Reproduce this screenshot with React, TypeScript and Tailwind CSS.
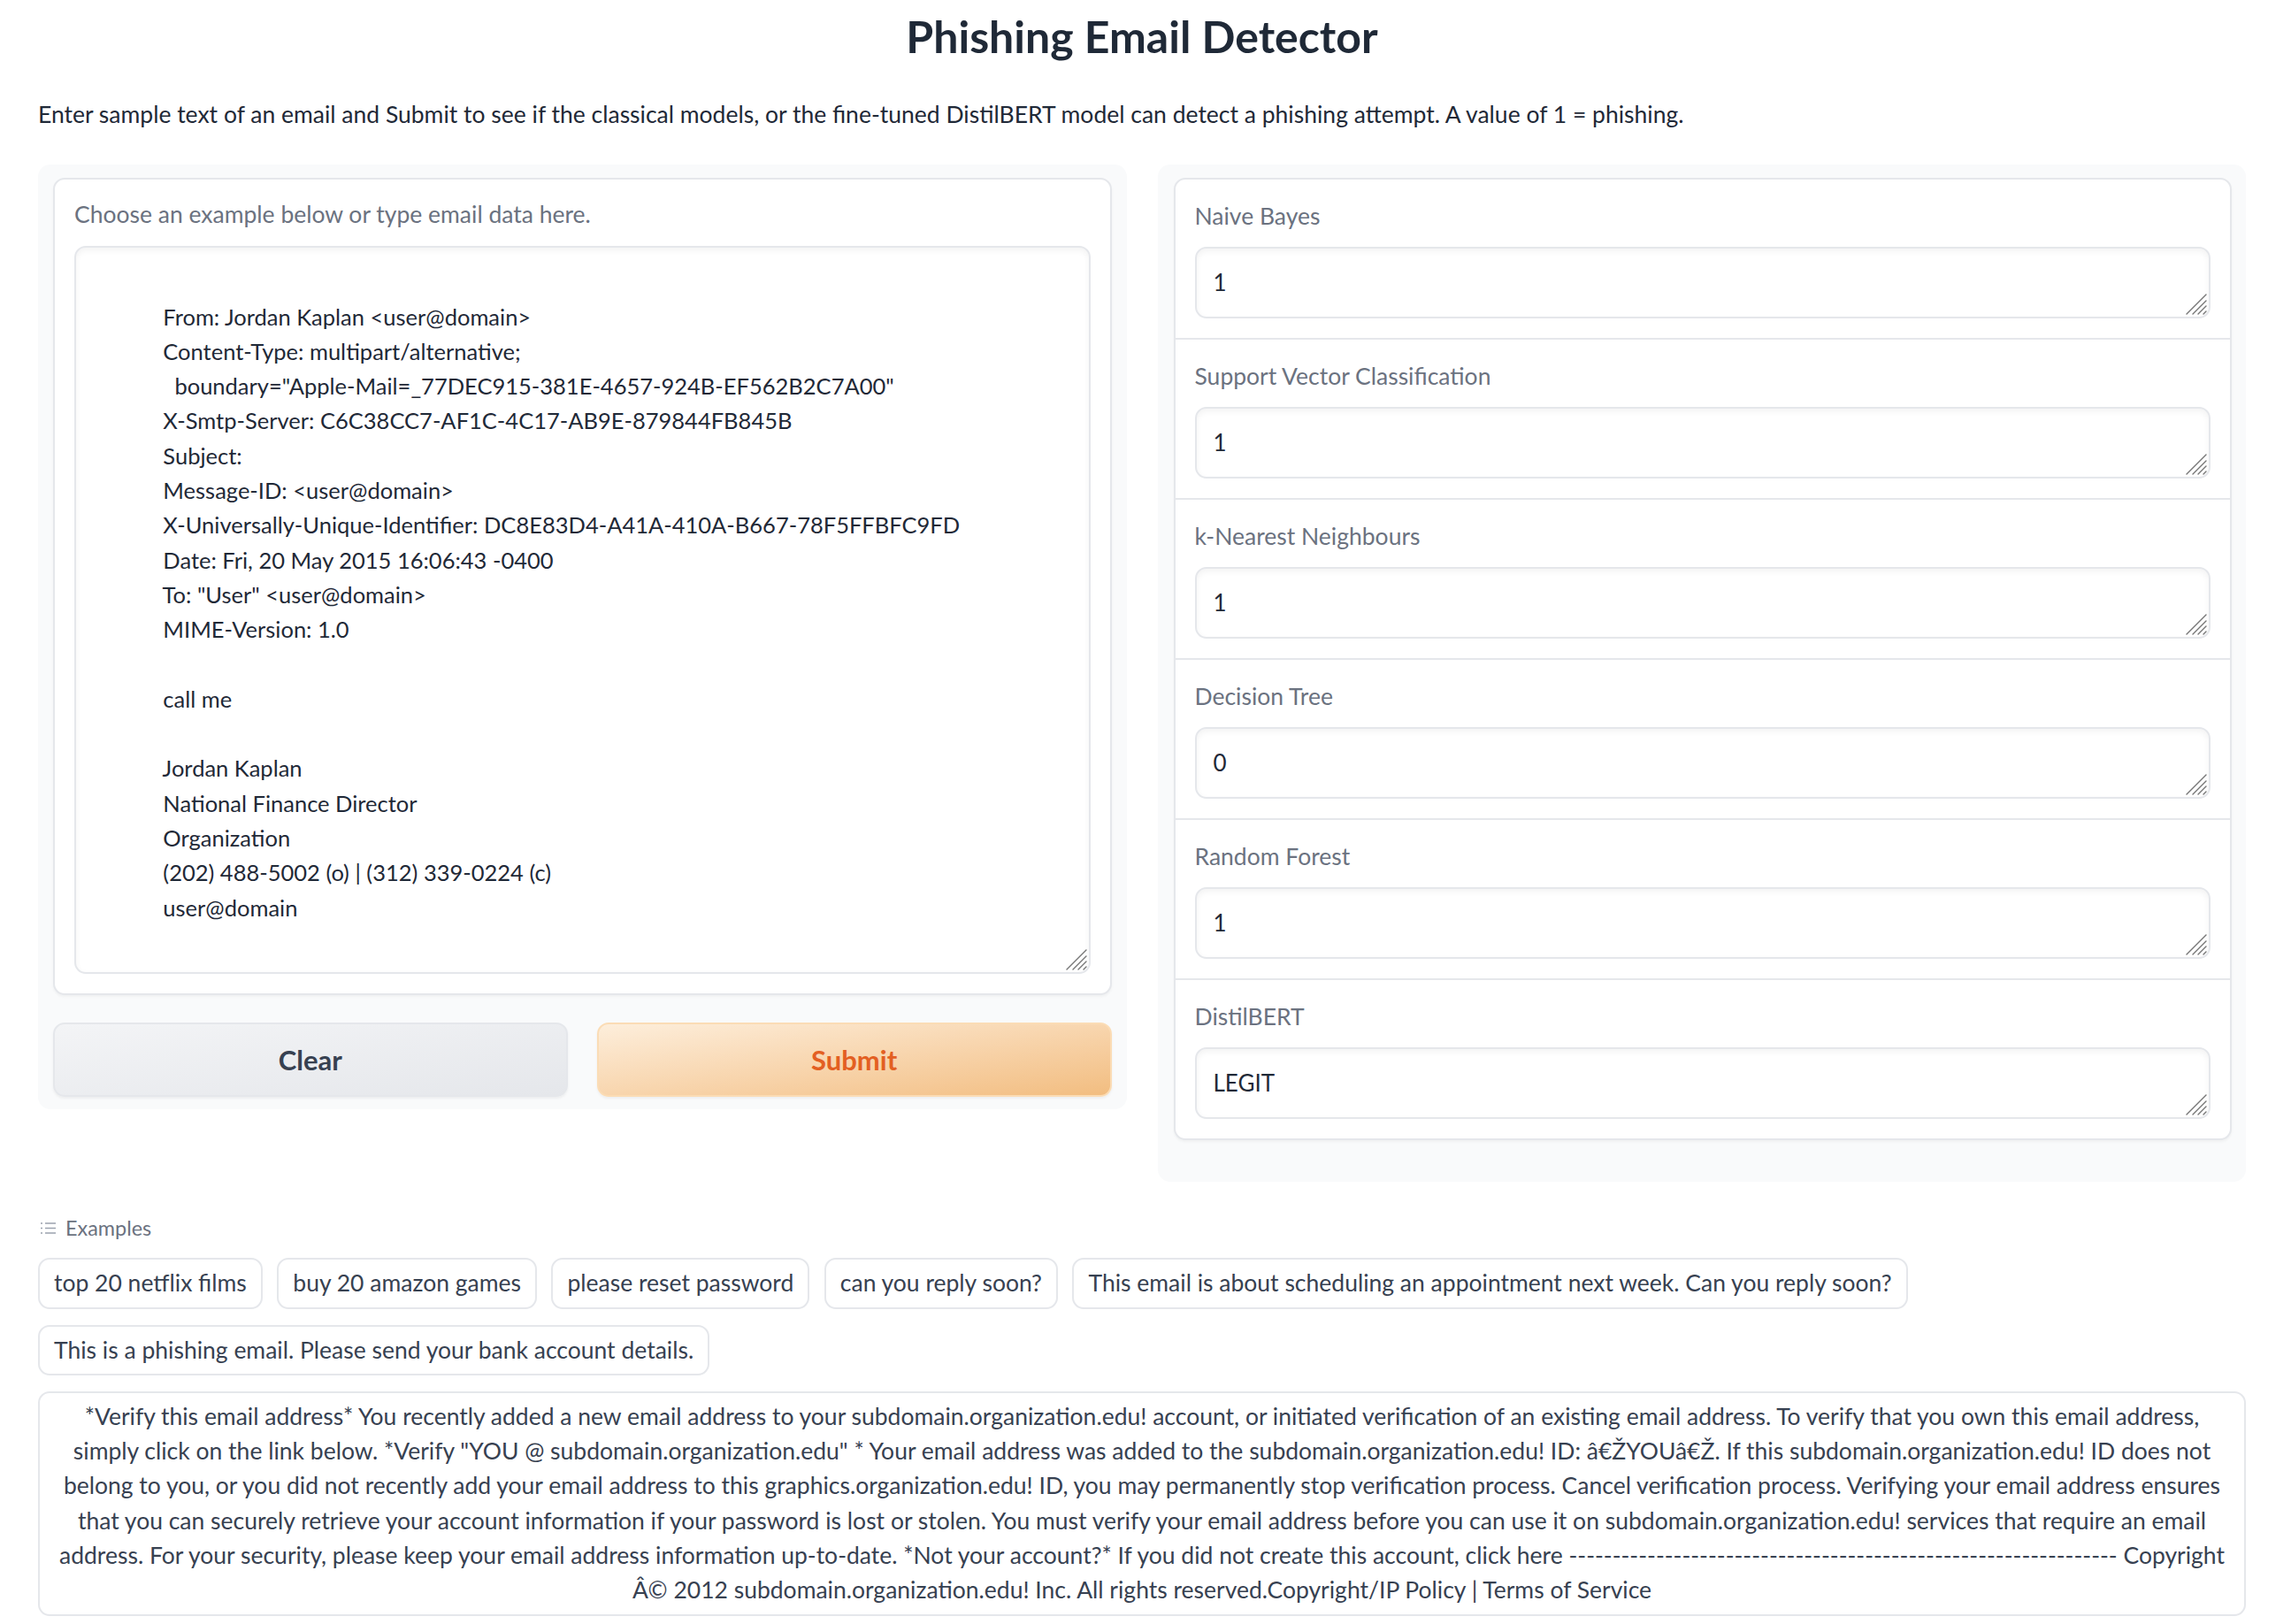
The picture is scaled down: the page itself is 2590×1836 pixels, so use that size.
import React from 'react';

const INDENT = '            ';

const EMAIL_LINES = [
  '',
  'From: Jordan Kaplan <user@domain>',
  'Content-Type: multipart/alternative;',
  '  boundary="Apple-Mail=_77DEC915-381E-4657-924B-EF562B2C7A00"',
  'X-Smtp-Server: C6C38CC7-AF1C-4C17-AB9E-879844FB845B',
  'Subject: ',
  'Message-ID: <user@domain>',
  'X-Universally-Unique-Identifier: DC8E83D4-A41A-410A-B667-78F5FFBFC9FD',
  'Date: Fri, 20 May 2015 16:06:43 -0400',
  'To: "User" <user@domain>',
  'MIME-Version: 1.0',
  '',
  'call me',
  '',
  'Jordan Kaplan',
  'National Finance Director',
  'Organization',
  '(202) 488-5002 (o) | (312) 339-0224 (c)',
  'user@domain',
];

const EMAIL = EMAIL_LINES.map((l) => (l ? INDENT + l : '')).join('\n');

const OUTPUTS = [
  { label: 'Naive Bayes', value: '1' },
  { label: 'Support Vector Classification', value: '1' },
  { label: 'k-Nearest Neighbours', value: '1' },
  { label: 'Decision Tree', value: '0' },
  { label: 'Random Forest', value: '1' },
  { label: 'DistilBERT', value: 'LEGIT' },
];

const EXAMPLES = [
  'top 20 netflix films',
  'buy 20 amazon games',
  'please reset password',
  'can you reply soon?',
  'This email is about scheduling an appointment next week. Can you reply soon?',
  'This is a phishing email. Please send your bank account details.',
];

// long example, broken where the reference wraps
const LONG_EXAMPLE = [
  '*Verify this email address* You recently added a new email address to your subdomain.organization.edu! account, or initiated verification of an existing email address. To verify that you own this email address,',
  'simply click on the link below. *Verify "YOU @ subdomain.organization.edu" * Your email address was added to the subdomain.organization.edu! ID: â€ŽYOUâ€Ž. If this subdomain.organization.edu! ID does not',
  'belong to you, or you did not recently add your email address to this graphics.organization.edu! ID, you may permanently stop verification process. Cancel verification process. Verifying your email address ensures',
  'that you can securely retrieve your account information if your password is lost or stolen. You must verify your email address before you can use it on subdomain.organization.edu! services that require an email',
  'address. For your security, please keep your email address information up-to-date. *Not your account?* If you did not create this account, click here ' +
    '-'.repeat(63) +
    ' Copyright',
  'Â© 2012 subdomain.organization.edu! Inc. All rights reserved.Copyright/IP Policy | Terms of Service',
];

const Grip = () => (
  <svg
    className="pointer-events-none absolute bottom-[4px] right-[4px] h-[24px] w-[24px]"
    viewBox="0 0 24 24"
    fill="none"
    stroke="#767676"
    strokeWidth="1.4"
    strokeLinecap="round"
  >
    <path d="M1 23 23 1M8 23 23 8M14 23 23 14M20 23 23 20" />
  </svg>
);

const OutputBox = ({ label, value }: { label: string; value: string }) => (
  <div className="px-[22px] pt-[24px] pb-[22px]">
    <div className="text-[26.5px] leading-[34px] text-[#6b7280]">{label}</div>
    <div className="relative mt-[18px]">
      <textarea
        readOnly
        value={value}
        rows={1}
        className="block h-[81px] w-full resize-none overflow-hidden rounded-[13px] border-2 border-[#e5e7eb] bg-white px-[19px] py-[19px] text-[26px] leading-[39.3px] text-[#1f2937] shadow-[inset_0_3px_7px_rgba(0,0,0,0.05)] outline-none"
      />
      <Grip />
    </div>
  </div>
);

export default function App() {
  return (
    <div className="min-h-screen bg-white pl-[43px] pr-[51px] font-[Lato,sans-serif] text-[#1f2937]">
      <h1 className="pt-[10px] text-center text-[50px] font-bold leading-[63px] text-[#1f2937]">
        Phishing Email Detector
      </h1>
      <p className="mt-[37px] text-[26.5px] leading-[39.3px]">
        Enter sample text of an email and Submit to see if the classical models, or the fine-tuned DistilBERT model can detect a phishing attempt. A value of 1 = phishing.
      </p>

      <div className="mt-[37px] grid grid-cols-2 items-start gap-[35px]">
        {/* Input side */}
        <div className="rounded-[14px] bg-[#f9fafb] px-[17px] pt-[15px] pb-[14px]">
          <div className="rounded-[13px] border-2 border-[#e5e7eb] bg-white p-[22px] shadow-[0_2px_3px_rgba(0,0,0,0.04)]">
            <div className="text-[26.5px] leading-[34px] text-[#6b7280]">
              Choose an example below or type email data here.
            </div>
            <div className="relative mt-[19px]">
              <textarea
                readOnly
                value={EMAIL}
                className="block h-[823px] w-full resize-none overflow-hidden whitespace-pre rounded-[13px] border-2 border-[#e5e7eb] bg-white px-[20px] py-[19px] text-[25.5px] leading-[39.3px] text-[#1f2937] shadow-[inset_0_3px_7px_rgba(0,0,0,0.05)] outline-none"
              />
              <Grip />
            </div>
          </div>
          <div className="mt-[31px] grid grid-cols-2 gap-[33px]">
            <button className="h-[84px] rounded-[13px] border-2 border-[#e5e7eb] bg-linear-to-br from-[#f3f4f6] to-[#e5e7eb] text-[31px] font-bold text-[#374151] shadow-[0_2px_3px_rgba(0,0,0,0.05)]">
              Clear
            </button>
            <button className="h-[84px] rounded-[13px] border-2 border-[#fbdcb5] bg-linear-to-br from-[#fdeedb] to-[#f2bd80] text-[31px] font-bold text-[#e35f22] shadow-[0_2px_3px_rgba(0,0,0,0.05)]">
              Submit
            </button>
          </div>
        </div>

        {/* Output side */}
        <div className="rounded-[14px] bg-[#f9fafb] pl-[18px] pr-[16px] pt-[15px] pb-[47px]">
          <div className="divide-y-2 divide-[#e5e7eb] rounded-[13px] border-2 border-[#e5e7eb] bg-white shadow-[0_2px_3px_rgba(0,0,0,0.04)]">
            {OUTPUTS.map((o) => (
              <OutputBox key={o.label} label={o.label} value={o.value} />
            ))}
          </div>
        </div>
      </div>

      {/* Examples */}
      <div className="mt-[35px] flex items-center gap-[11px] text-[23.4px] leading-[34px] text-[#6b7280]">
        <svg className="ml-[3px]" width="17" height="13" viewBox="0 0 17 13" fill="none" stroke="#9ca3af" strokeWidth="1.3">
          <path d="M0 1h2M0 6.5h2M0 12h2M5 1h12M5 6.5h12M5 12h12" />
        </svg>
        <span>Examples</span>
      </div>
      <div className="mt-[17px] flex flex-wrap gap-x-[16.5px] gap-y-[18px] pb-[11px]">
        {EXAMPLES.map((e) => (
          <button
            key={e}
            className="rounded-[13px] border-2 border-[#e5e7eb] bg-white px-[16px] py-[7px] text-[26.5px] leading-[39.3px] text-[#374151]"
          >
            {e}
          </button>
        ))}
        <button className="w-full rounded-[13px] border-2 border-[#e5e7eb] bg-white px-[16px] py-[7px] text-center text-[26.5px] leading-[39.3px] text-[#374151]">
          {LONG_EXAMPLE.map((l, i) => (
            <span key={i} className="block whitespace-nowrap">
              {l}
            </span>
          ))}
        </button>
      </div>
    </div>
  );
}
